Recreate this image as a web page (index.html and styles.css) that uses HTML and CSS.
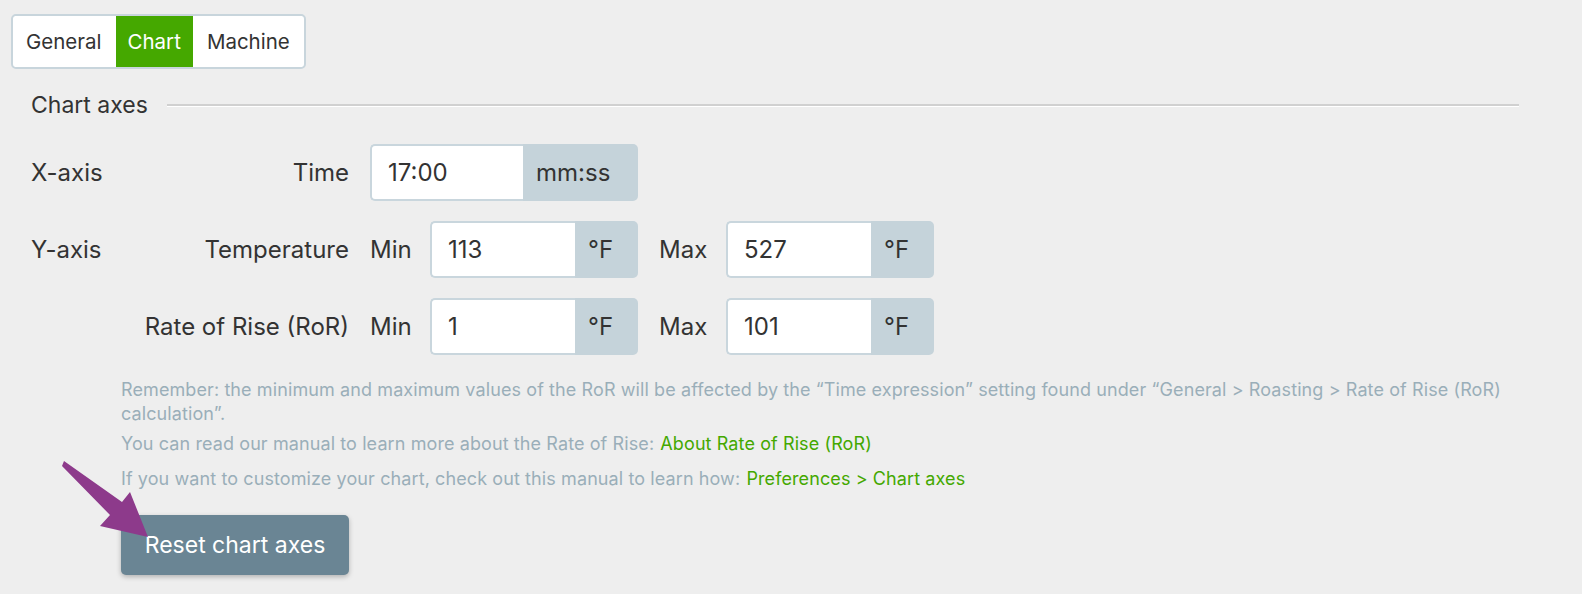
FILE: index.html
```html
<!DOCTYPE html>
<html lang="en">
<head>
    <meta charset="UTF-8">
    <title>Preferences - Chart</title>
    <link rel="stylesheet" href="styles.css">
</head>
<body>
    <div class="tabs">
        <button class="tab">General</button>
        <button class="tab active">Chart</button>
        <button class="tab">Machine</button>
    </div>

    <div class="section-title">
        <span>Chart axes</span>
        <div class="rule"></div>
    </div>

    <div class="axes">
        <div class="axis">X-axis</div>
        <div class="field">Time</div>
        <div class="controls">
            <div class="input-group time">
                <input type="text" value="17:00">
                <span class="unit">mm:ss</span>
            </div>
        </div>

        <div class="axis">Y-axis</div>
        <div class="field">Temperature</div>
        <div class="controls">
            <span class="lbl">Min</span>
            <div class="input-group">
                <input type="text" value="113">
                <span class="unit">°F</span>
            </div>
            <span class="lbl">Max</span>
            <div class="input-group">
                <input type="text" value="527">
                <span class="unit">°F</span>
            </div>
        </div>

        <div class="axis"></div>
        <div class="field">Rate of Rise (RoR)</div>
        <div class="controls">
            <span class="lbl">Min</span>
            <div class="input-group">
                <input type="text" value="1">
                <span class="unit">°F</span>
            </div>
            <span class="lbl">Max</span>
            <div class="input-group">
                <input type="text" value="101">
                <span class="unit">°F</span>
            </div>
        </div>
    </div>

    <div class="notes">
        <p class="remember">Remember: the minimum and maximum values of the RoR will be affected by the “Time expression” setting found under “General &gt; Roasting &gt; Rate of Rise (RoR) calculation”.</p>
        <p class="manual">You can read our manual to learn more about the Rate of Rise: <a href="#">About Rate of Rise (RoR)</a></p>
        <p>If you want to customize your chart, check out this manual to learn how: <a href="#">Preferences &gt; Chart axes</a></p>
    </div>

    <button class="reset">Reset chart axes</button>

    <!-- annotation arrow -->
    <svg class="arrow" width="160" height="560" viewBox="0 0 160 560">
        <polygon points="64,461 122,502 130,492 148,537 100,526 110,515 62,466" fill="#8d3a8b"/>
    </svg>
</body>
</html>
```

FILE: styles.css
```css
body {
    margin: 0;
    padding: 14px 31px 0 31px;
    background: #eeeeee;
    font-family: Inter, "Noto Sans", sans-serif;
    color: #333;
    height: 594px;
    box-sizing: border-box;
    overflow: hidden;
}
.tabs {
    display: inline-flex;
    margin-left: -20px;
    border: 2px solid #c8d5dc;
    border-radius: 5px;
    background: #fff;
    padding: 0 1px;
    height: 55px;
    box-sizing: border-box;
}
.tab {
    border: none;
    background: #fff;
    font-family: inherit;
    font-size: 20.5px;
    color: #333;
    padding: 0 12px;
    margin: 0 1px;
}
.tab:first-child {
    padding-left: 11px;
}
.tab.active {
    background: #45a800;
    color: #fff;
}
.section-title {
    display: flex;
    align-items: center;
    margin-top: 22px;
    font-size: 23px;
    width: 1488px;
}
.rule {
    flex: 1;
    margin-left: 19px;
    border-top: 2px solid #d0d0d0;
    border-bottom: 1px solid #fff;
    margin-top: 1px;
}
.axes {
    display: grid;
    grid-template-columns: 97px 200px auto;
    column-gap: 21px;
    row-gap: 20px;
    align-items: center;
    margin-top: 25px;
    font-size: 24px;
}
.field {
    justify-self: end;
    white-space: nowrap;
    text-align: right;
}
.controls {
    display: flex;
    align-items: center;
}
.lbl {
    width: 60px;
}
.controls .input-group + .lbl {
    margin-left: 21px;
    width: 67px;
}
.input-group {
    display: flex;
    height: 57px;
}
.input-group input {
    width: 145px;
    border: 2px solid #c9d6dd;
    border-right: none;
    border-radius: 5px 0 0 5px;
    box-sizing: border-box;
    font-family: inherit;
    font-size: 24px;
    color: #333;
    padding: 0 16px;
    background: #fff;
    outline: none;
}
.input-group.time input {
    width: 153px;
}
.unit {
    display: flex;
    align-items: center;
    background: #c5d3da;
    border-radius: 0 5px 5px 0;
    padding: 0 13px;
    width: 63px;
    box-sizing: border-box;
    font-size: 24px;
}
.input-group.time .unit {
    width: 115px;
}
.notes {
    margin-left: 90px;
    margin-top: 23px;
    width: 1398px;
    color: #9aaeb9;
    font-size: 18px;
    letter-spacing: 0.1px;
}
.notes p {
    margin: 0 0 11px 0;
    line-height: 24px;
}
.notes p.remember {
    margin-bottom: 6px;
}
.notes a {
    color: #44a800;
    text-decoration: none;
    margin-left: 1px;
}
.reset {
    display: block;
    margin-left: 90px;
    margin-top: 24px;
    width: 228px;
    height: 60px;
    border: none;
    border-radius: 5px;
    background: #6a8594;
    color: #fff;
    font-family: inherit;
    font-size: 23px;
    box-shadow: 0 2px 5px rgba(0, 0, 0, 0.25);
}
.arrow {
    position: absolute;
    left: 0;
    top: 0;
    pointer-events: none;
}
```
